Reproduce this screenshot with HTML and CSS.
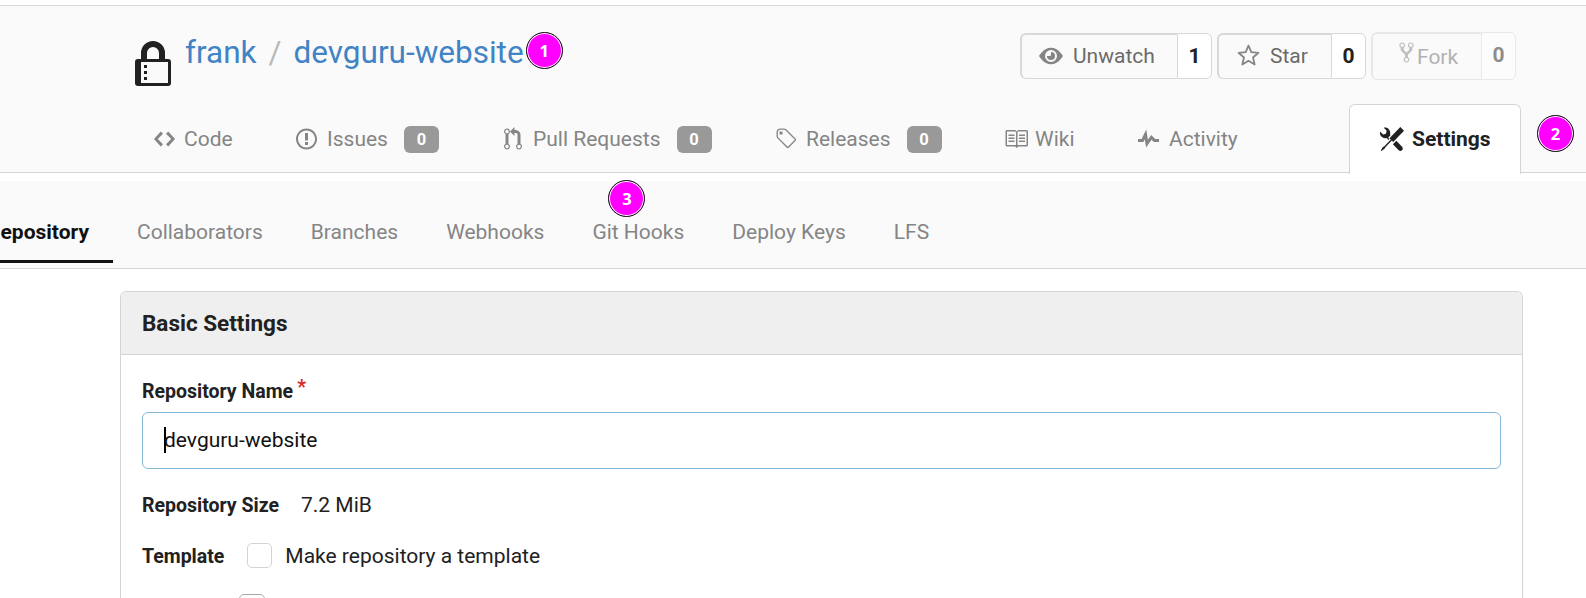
FILE: index.html
```html
<!DOCTYPE html>
<html lang="en">
<head>
<meta charset="utf-8">
<title>frank/devguru-website - Settings</title>
<link rel="stylesheet" href="styles.css">
</head>
<body>
<header class="repo-header">
  <div class="repo-top">
    <svg class="lock" viewBox="0 0 36 45"><path d="M9 20V12a9 9 0 0 1 18 0V20" fill="none" stroke="#212121" stroke-width="6"/><path fill="#212121" fill-rule="evenodd" d="M3 18h30a3 3 0 0 1 3 3v21a3 3 0 0 1-3 3H3a3 3 0 0 1-3-3V21a3 3 0 0 1 3-3zM6 21v21h27V21zM9 24h3v3H9zM9 30h3v3H9zM9 36h3v3H9z"/></svg>
    <h1 class="title"><a>frank</a><span class="slash">/</span><a>devguru-website</a></h1>
    <span class="marker">1</span>
    <div class="actions">
      <div class="action watch"><span class="action-label"><svg viewBox="0 0 16 16"><path fill-rule="evenodd" d="M8.060 2.500C3 2.500 0 8 0 8s3 5.500 8.060 5.500C13 13.500 16 8 16 8s-3-5.500-7.940-5.500zM8 12a4 4 0 1 1 0-8 4 4 0 0 1 0 8z"/><path d="M8 5.300A2.700 2.700 0 1 1 5.300 8h1.900A.8.8 0 0 0 8 7.200z"/></svg>Unwatch</span><b>1</b></div>
      <div class="action star"><span class="action-label"><svg viewBox="0 0 22 22"><path fill="none" stroke="currentColor" stroke-width="1.700" stroke-linejoin="round" d="M11 1.500l2.700 6.300 6.800.6-5.200 4.500 1.600 6.700-5.900-3.500-5.900 3.500 1.600-6.700L1.500 8.400l6.800-.6z"/></svg>Star</span><b>0</b></div>
      <div class="action fork"><span class="action-label"><svg viewBox="0 0 10 16"><path d="M8 1a1.993 1.993 0 0 0-1 3.720V6L5 8 3 6V4.720A1.993 1.993 0 0 0 2 1a1.993 1.993 0 0 0-1 3.720V6.500l3 3v1.780A1.993 1.993 0 0 0 5 15a1.993 1.993 0 0 0 1-3.720V9.500l3-3V4.720A1.993 1.993 0 0 0 8 1zM2 4.200C1.340 4.200.8 3.650.8 3c0-.65.55-1.200 1.200-1.200.65 0 1.200.55 1.200 1.200 0 .65-.55 1.200-1.200 1.200zm3 10c-.66 0-1.200-.55-1.200-1.200 0-.65.55-1.200 1.200-1.200.65 0 1.200.55 1.200 1.200 0 .65-.55 1.200-1.200 1.200zm3-10c-.66 0-1.200-.55-1.200-1.200 0-.65.55-1.200 1.200-1.200.65 0 1.200.55 1.200 1.200 0 .65-.55 1.200-1.200 1.200z"/></svg><span class="fork-text">Fork</span></span><b>0</b></div>
    </div>
  </div>
  <nav class="tabs">
    <a class="tab code"><svg viewBox="0 0 14 16"><path d="M9.500 3L8 4.500 11.500 8 8 11.500 9.500 13 14 8 9.500 3zm-5 0L0 8l4.500 5L6 11.500 2.500 8 6 4.500 4.500 3z"/></svg>Code</a>
    <a class="tab issues"><svg viewBox="0 0 14 16"><path d="M7 2.300c3.140 0 5.700 2.560 5.700 5.700s-2.560 5.700-5.700 5.700A5.710 5.710 0 0 1 1.300 8c0-3.140 2.560-5.700 5.700-5.700zM7 1C3.140 1 0 4.140 0 8s3.140 7 7 7 7-3.140 7-7-3.140-7-7-7zm1 3H6v5h2V4zm0 6H6v2h2v-2z"/></svg>Issues<span class="count">0</span></a>
    <a class="tab pulls"><svg viewBox="0 0 12 16"><path d="M11 11.280V5c-.03-.78-.34-1.470-.94-2.060C9.460 2.350 8.780 2.030 8 2H7V0L4 3l3 3V4h1c.27.02.48.11.69.31.21.2.3.42.31.69v6.280A1.993 1.993 0 0 0 10 15a1.993 1.993 0 0 0 1-3.720zm-1 2.920c-.66 0-1.200-.55-1.200-1.200 0-.65.55-1.200 1.200-1.200.65 0 1.200.55 1.200 1.200 0 .65-.55 1.200-1.200 1.200zM4 3c0-1.110-.89-2-2-2a1.993 1.993 0 0 0-1 3.720v6.560A1.993 1.993 0 0 0 2 15a1.993 1.993 0 0 0 1-3.720V4.720c.59-.34 1-.98 1-1.720zm-.8 10c0 .66-.55 1.200-1.200 1.200-.65 0-1.200-.55-1.200-1.200 0-.65.55-1.200 1.200-1.200.65 0 1.200.55 1.200 1.200zM2 4.200C1.340 4.200.8 3.650.8 3c0-.65.55-1.200 1.200-1.200.65 0 1.200.55 1.200 1.200 0 .65-.55 1.200-1.200 1.200z"/></svg>Pull Requests<span class="count">0</span></a>
    <a class="tab releases"><svg viewBox="0 0 14 16"><path d="M7.730 1.730C7.260 1.260 6.620 1 5.960 1H3.500C2.130 1 1 2.130 1 3.500v2.470c0 .66.27 1.300.73 1.770l6.060 6.060c.39.39 1.020.39 1.410 0l4.590-4.590a.996.996 0 0 0 0-1.410L7.730 1.730zM2.380 7.090c-.31-.3-.47-.7-.47-1.130V3.500c0-.88.72-1.590 1.590-1.590h2.470c.42 0 .83.16 1.130.47l6.140 6.130-4.730 4.730-6.130-6.150zM3.010 3h2v2H3V3h.01z"/></svg>Releases<span class="count">0</span></a>
    <a class="tab wiki"><svg viewBox="0 0 16 16"><path d="M3 5h4v1H3V5zm0 3h4V7H3v1zm0 2h4V9H3v1zm11-5h-4v1h4V5zm0 2h-4v1h4V7zm0 2h-4v1h4V9zm2-6v9c0 .55-.45 1-1 1H9.500l-1 1-1-1H2c-.55 0-1-.45-1-1V3c0-.55.45-1 1-1h5.500l1 1 1-1H15c.55 0 1 .45 1 1zm-8 .5L7.500 3H2v9h6V3.500zm7-.5H9.500l-.5.5V12h6V3z"/></svg>Wiki</a>
    <a class="tab activity"><svg viewBox="0 0 14 16"><path d="M11.500 8L8.800 5.400 6.600 8.500 5.500 1.600 2.380 8H0v2h3.600l.9-1.800.9 5.400L9 8.500l1.600 1.500H14V8h-2.500z"/></svg>Activity</a>
    <a class="tab settings"><svg viewBox="0 0 16 16"><path d="M4.480 7.270c.26.26 1.280 1.330 1.280 1.330l.56-.58-.88-.91 1.690-1.800s-.76-.74-.43-.45c.32-1.190.03-2.510-.87-3.440C4.930.5 3.660.2 2.520.51l1.930 2-.51 1.960-1.890.52-1.930-1.990C-.19 4.170.1 5.480 1 6.400c.94.98 2.290 1.260 3.480.87zm6.440 1.940l-2.330 2.300 3.840 3.980c.31.33.73.49 1.140.49.41 0 .82-.16 1.140-.49.63-.65.63-1.700 0-2.350l-3.790-3.930zM16 2.530L13.550 0 6.330 7.460l.88.91-4.310 4.460-.99.53-1.390 2.270.35.37 2.200-1.440.51-1.020L7.900 9.080l.88.91L16 2.530z"/></svg>Settings</a>
    <span class="marker">2</span>
  </nav>
</header>
<nav class="subnav">
  <a class="current">Repository</a><a>Collaborators</a><a>Branches</a><a>Webhooks</a><a class="hooks">Git Hooks<span class="marker">3</span></a><a>Deploy Keys</a><a>LFS</a>
</nav>
<main class="card">
  <h2>Basic Settings</h2>
  <form class="form">
    <div class="label">Repository Name<span class="required">*</span></div>
    <div class="input"><span class="caret"></span>devguru-website</div>
    <div class="row size"><b>Repository Size</b><span>7.2 MiB</span></div>
    <div class="row template"><b>Template</b><span class="box"></span><span>Make repository a template</span></div>
    <div class="row"><span class="box next"></span></div>
  </form>
</main>
</body>
</html>
```
FILE: styles.css
```css
* { box-sizing: border-box; }
body {
  margin: 0;
  padding-top: 5px;
  height: 598px;
  overflow: hidden;
  background: #fff;
  color: #212121;
  font: 21px/30px Roboto, sans-serif;
}
svg { fill: currentColor; flex: none; display: block; }
b { font-weight: 700; }
.repo-header {
  height: 168px;
  background: #fafafa;
  border-top: 1px solid #d8d8d9;
  border-bottom: 1px solid #d4d4d5;
}
.repo-top { display: flex; height: 98px; padding: 0 70px 0 135px; }
.lock { width: 36px; height: 45px; margin-top: 35px; }
.title {
  display: flex;
  margin: 27px 0 0 14px;
  font-size: 31.5px;
  line-height: 40px;
  font-weight: 400;
  color: #4183c4;
}
.slash { width: 37px; padding-left: 12px; color: #b9b9b9; }
.marker {
  flex: none;
  width: 37px;
  height: 37px;
  border: 1.500px solid #111;
  border-radius: 50%;
  background: #f0f;
  box-shadow: inset 0 0 0 1px #fff;
  color: #fff;
  font: 700 16.500px/36px "Noto Sans", sans-serif;
  text-align: center;
}
.repo-top .marker { margin: 26px 0 0 2px; }
.actions { display: flex; margin: 27px 0 0 auto; gap: 5px; }
.action { display: flex; height: 46px; line-height: 44px; }
.action-label {
  display: flex;
  align-items: center;
  padding-bottom: 2px;
  border: 1px solid #d8d8d8;
  border-width: 2px 0 1px 2px;
  border-radius: 6px 0 0 6px;
  color: #6a6a6a;
}
.action-label svg { color: #858585; }
.action b {
  border: 1px solid #d8d8d8;
  border-radius: 0 6px 6px 0;
  background: #fff;
  text-align: center;
}
.watch .action-label { width: 157px; padding-left: 17px; }
.watch svg { width: 24px; height: 24px; margin-right: 10px; }
.watch b { width: 35px; }
.star .action-label { width: 114px; padding-left: 18px; }
.star svg { width: 23px; height: 23px; margin-right: 10px; }
.star b { width: 35px; }
.fork { height: 48px; margin-top: -1px; opacity: .5; }
.fork .action-label { width: 110px; padding-left: 26px; }
.fork svg { width: 15px; height: 23px; margin: -6px 3px 0 0; }
.fork-text { padding-top: 2px; }
.fork b { width: 35px; line-height: 45px; }
.tabs {
  display: grid;
  grid-template-columns: 141px 208px 272px 229px 133px 211px 172px auto;
  height: 69px;
  padding-left: 155px;
  color: #858585;
}
.tab { display: flex; align-items: center; white-space: nowrap; padding-top: 1px; height: 69px; }
.tab svg { width: 21px; height: 24px; margin-right: 9px; }
.tab.code svg { margin: 0 9px 0 -1px; }
.tab.pulls svg { width: 18px; margin-right: 11px; }
.tab.releases svg { margin: 0 10px 0 -1px; }
.tab.wiki svg { width: 24px; margin: 0 7px 0 -1px; }
.tab.activity svg { margin-right: 10px; }
.tab.issues svg { margin-right: 10px; }
.count {
  width: 35px;
  height: 27px;
  margin: 1px 0 0 16px;
  border-radius: 6px;
  background: #999;
  color: #fff;
  font-size: 16.500px;
  line-height: 27px;
  font-weight: 700;
  text-align: center;
}
.tab.settings {
  height: 70px;
  padding: 0 0 1px 30px;
  border: 1px solid #d4d4d5;
  border-bottom: 0;
  border-radius: 6px 6px 0 0;
  background: #fff;
  color: #212121;
  font-weight: 700;
}
.tab.settings svg { width: 24px; margin-right: 8px; }
.tabs .marker { margin: 11px 0 0 16px; }
.subnav {
  display: flex;
  gap: 48px;
  height: 88px;
  margin-top: 8px;
  padding-left: 137px;
  background: #fafafa;
  border-bottom: 1px solid #d4d4d5;
  color: #858585;
  line-height: 102px;
  white-space: nowrap;
}
.subnav .current {
  height: 82px;
  width: 170px;
  margin-left: -194px;
  margin-right: -24px;
  padding-right: 24px;
  border-bottom: 3px solid #111;
  color: #111;
  font-weight: 700;
  text-align: right;
}
.hooks { position: relative; }
.hooks .marker { position: absolute; left: 16px; top: -1px; }
.card {
  width: 1403px;
  height: 307px;
  margin: 22px 0 0 120px;
  border: 1px solid #d4d4d5;
  border-bottom: 0;
  border-radius: 6px 6px 0 0;
  overflow: hidden;
}
.card h2 {
  margin: 0;
  height: 63px;
  padding-left: 21px;
  border-bottom: 1px solid #d4d4d5;
  background: #efefef;
  font-size: 22.500px;
  line-height: 62px;
  font-weight: 700;
}
.form { padding: 22px 21px 0; }
.label { height: 35px; font-size: 19.500px; font-weight: 700; }
.required { margin-left: 4px; color: #db2828; position: relative; top: -4px; }
.input {
  display: flex;
  align-items: center;
  height: 57px;
  padding: 0 0 2px 21px;
  border: 1px solid #85b7d9;
  border-radius: 6px;
  color: #111;
}
.caret { width: 2px; height: 26px; margin-right: -2px; background: #000; }
.row { display: flex; align-items: center; }
.row b { font-size: 19.500px; padding-top: 1px; margin-bottom: -1px; }
.size { margin-top: 21px; gap: 22px; }
.template { margin-top: 21px; }
.box { width: 25px; height: 25px; margin: 0 13px 1px 23px; border: 1px solid #d4d4d5; border-radius: 5px; }
.box.next { margin: 23px 0 0 97px; border-color: #aaa; width: 26px; }
```
